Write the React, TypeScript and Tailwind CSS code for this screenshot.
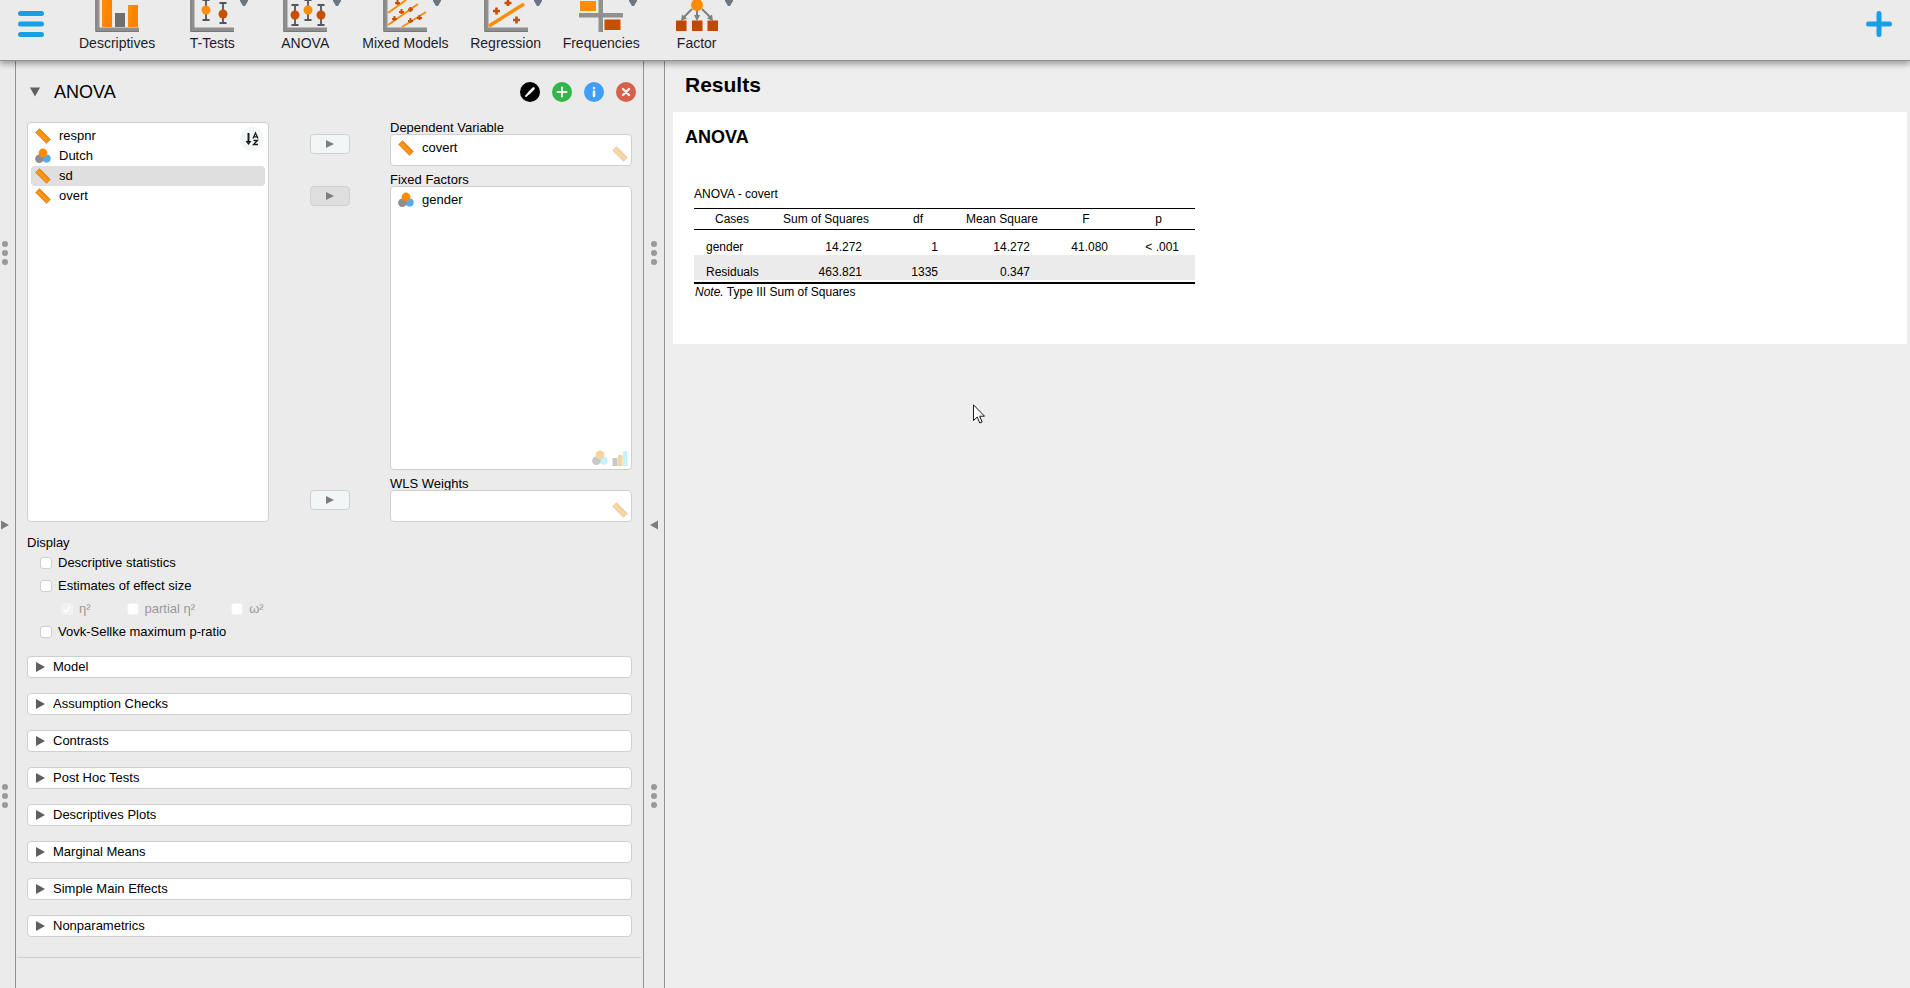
import { useState } from 'react';
import type { ReactNode } from 'react';

type VarType = 'scale' | 'nominal' | 'ordinal';

interface Variable {
  name: string;
  type: VarType;
}

const available: Variable[] = [
  { name: 'respnr', type: 'scale' },
  { name: 'Dutch', type: 'nominal' },
  { name: 'sd', type: 'scale' },
  { name: 'overt', type: 'scale' },
];

const sections = [
  'Model',
  'Assumption Checks',
  'Contrasts',
  'Post Hoc Tests',
  'Descriptives Plots',
  'Marginal Means',
  'Simple Main Effects',
  'Nonparametrics',
];

/* ── Variable icons ─────────────────────────────────────────── */

function VarIcon({ type, faded }: { type: VarType; faded?: boolean }) {
  const orange = faded ? '#f7d3a0' : '#ff8c05';
  const gray = faded ? '#c8c8c8' : '#8e8e8e';
  const blue = faded ? '#c2f3ff' : '#58abe6';

  return (
    <svg width="16" height="16" viewBox="0 0 16 16" className="block">
      {type === 'scale' && (
        <>
          <path d="M4.500 0.500 L15.500 11.500 L11.500 15.500 L0.500 4.500 Z" fill={orange} stroke={faded ? '#dccdb4' : '#b98a55'} strokeWidth="0.600" />
          <path d="M3.500 4 L12 12.500" stroke={faded ? '#fdeccb' : '#ffc27a'} strokeWidth="0.900" strokeDasharray="1.400 0.900" />
          <path d="M5.500 2.500 L13.500 10.500" stroke={faded ? '#f3c88c' : '#f07800'} strokeWidth="0.700" />
        </>
      )}
      {type === 'nominal' && (
        <>
          <circle cx="11.600" cy="10.600" r="4.100" fill={blue} />
          <circle cx="4.400" cy="10.800" r="4.300" fill={gray} />
          <circle cx="8" cy="5" r="4.400" fill={orange} />
        </>
      )}
      {type === 'ordinal' && (
        <>
          <rect x="0.500" y="8" width="5" height="8" fill={gray} />
          <rect x="6" y="5" width="4.500" height="11" fill={orange} />
          <rect x="11" y="1" width="4.500" height="15" fill={blue} />
        </>
      )}
    </svg>
  );
}

/* ── Ribbon icons ───────────────────────────────────────────── */

function Axes() {
  return (
    <>
      <path d="M0.500 0 V31.500 H44 V27.500 H4.500 V0 Z" fill="#8f8f8f" />
      <path d="M0.800 0 V31.500 H44" fill="none" stroke="#777777" strokeWidth="1" />
    </>
  );
}

function ErrorBar({ x, top, bottom, dot, color }: { x: number; top: number; bottom: number; dot: number; color: string }) {
  return (
    <>
      <path d={`M${x} ${top} V${bottom} M${x - 3.5} ${top} H${x + 3.5} M${x - 3.5} ${bottom} H${x + 3.5}`} stroke="#555555" strokeWidth="1.8" />
      <circle cx={x} cy={dot} r="4.5" fill={color} />
    </>
  );
}

function RibbonSvg({ children }: { children: ReactNode }) {
  return (
    <svg width="44" height="32" viewBox="0 0 44 32" className="block">
      {children}
    </svg>
  );
}

const ribbon: { label: string; menu: boolean; icon: ReactNode }[] = [
  {
    label: 'Descriptives',
    menu: false,
    icon: (
      <RibbonSvg>
        <Axes />
        <rect x="7" y="0" width="10" height="27" fill="#ff8c05" />
        <rect x="20" y="13" width="10" height="14" fill="#6f6f6f" />
        <rect x="33" y="5" width="10" height="22" fill="#ff8c05" />
        <path d="M12 0 L17 0 V27 H9 Z M38 5 H43 V27 H34 Z" fill="#f57c00" opacity="0.5" />
      </RibbonSvg>
    ),
  },
  {
    label: 'T-Tests',
    menu: true,
    icon: (
      <RibbonSvg>
        <Axes />
        <ErrorBar x={16} top={0} bottom={20} dot={10} color="#ff8c05" />
        <ErrorBar x={33} top={3} bottom={23} dot={14} color="#c75000" />
      </RibbonSvg>
    ),
  },
  {
    label: 'ANOVA',
    menu: true,
    icon: (
      <RibbonSvg>
        <Axes />
        <ErrorBar x={12} top={5} bottom={25} dot={15} color="#c75000" />
        <ErrorBar x={25} top={0} bottom={20} dot={10} color="#ff8c05" />
        <ErrorBar x={38} top={5} bottom={25} dot={15} color="#c75000" />
      </RibbonSvg>
    ),
  },
  {
    label: 'Mixed Models',
    menu: true,
    icon: (
      <RibbonSvg>
        <Axes />
        <path d="M5 13 L23 0 M5 25 L35 4 M19 27 L43 12" stroke="#ff8c05" strokeWidth="2" />
        <path
          d="M12 3 H17 M14.500 0 V5 M16 12 H21 M18.500 9 V14 M25 9.500 H30 M27.500 7 V12 M9 19 H14 M11.500 16 V21 M25 21 H30 M27.500 18 V23 M34 18 H39 M36.500 15 V20"
          stroke="#c75000"
          strokeWidth="2"
        />
      </RibbonSvg>
    ),
  },
  {
    label: 'Regression',
    menu: true,
    icon: (
      <RibbonSvg>
        <Axes />
        <path d="M5 26 L40 4" stroke="#ff8c05" strokeWidth="3.5" />
        <path d="M9 11 H16 M12.500 7.500 V14.500 M20.500 3 H27.500 M24 0 V6 M29 20 H36 M32.500 16.500 V23.500" stroke="#c75000" strokeWidth="2.6" />
      </RibbonSvg>
    ),
  },
  {
    label: 'Frequencies',
    menu: true,
    icon: (
      <RibbonSvg>
        <path d="M19.500 0 H24 V13 H44 V17.500 H24 V32 H19.500 V17.500 H0 V13 H19.500 Z" fill="#909090" />
        <rect x="1" y="1" width="16" height="10" fill="#ff8c05" />
        <rect x="25.500" y="19.500" width="16" height="10.500" fill="#c75000" />
      </RibbonSvg>
    ),
  },
  {
    label: 'Factor',
    menu: true,
    icon: (
      <RibbonSvg>
        <path d="M17 9 L8 18 M22 10 V18 M27 9 L36 18" stroke="#808080" strokeWidth="2" />
        <path d="M6 21 L7 14.500 L12 18.500 Z M22 21 L19 15 H25 Z M38 21 L37 14.500 L32 18.500 Z" fill="#808080" />
        <circle cx="22" cy="5" r="6" fill="#ff8c05" />
        <rect x="1" y="20.500" width="10.500" height="10.500" fill="#c04800" />
        <rect x="17" y="20.500" width="10.500" height="10.500" fill="#c04800" />
        <rect x="32.500" y="20.500" width="10.500" height="10.500" fill="#c04800" />
      </RibbonSvg>
    ),
  },
];

function Ribbon() {
  return (
    <header className="relative z-10 flex h-[61px] shrink-0 items-start border-b border-[#929292] bg-[#ebebeb] px-[18px] shadow-[0_3px_6px_rgba(0,0,0,0.35)]">
      <button type="button" aria-label="Main menu" className="mt-[11px] mr-[35px]">
        <svg width="26" height="26" viewBox="0 0 26 26" className="block">
          <path d="M2.500 2.500 H23.500 M2.500 13 H23.500 M2.500 23.500 H23.500" stroke="#17a0e6" strokeWidth="5" strokeLinecap="round" />
        </svg>
      </button>
      <nav className="flex gap-[21px]">
        {ribbon.map((item) => (
          <button key={item.label} type="button" className="flex min-w-[72px] flex-col items-center">
            <span className="relative flex w-[72px] justify-center">
              {item.icon}
              {item.menu && (
                <svg width="8" height="6" viewBox="0 0 8 6" className="absolute top-0 right-0">
                  <path d="M0 0 H8 V1 L5 6 H3 L0 1 Z" fill="#6c7680" />
                </svg>
              )}
            </span>
            <span className="mt-[3px] text-sm leading-4 whitespace-nowrap text-[#1c1c2c]">{item.label}</span>
          </button>
        ))}
      </nav>
      <button type="button" aria-label="Show modules" className="mt-[11px] ml-auto">
        <svg width="26" height="26" viewBox="0 0 26 26" className="block">
          <path d="M2.500 13 H23.500 M13 2.500 V23.500" stroke="#17a0e6" strokeWidth="5" strokeLinecap="round" />
        </svg>
      </button>
    </header>
  );
}

/* ── Splitters ──────────────────────────────────────────────── */

function Dots() {
  return (
    <span className="flex flex-col gap-[3px]">
      <span className="size-1.5 rounded-full bg-[#999999]" />
      <span className="size-1.5 rounded-full bg-[#999999]" />
      <span className="size-1.5 rounded-full bg-[#999999]" />
    </span>
  );
}

function SplitterHandle({ direction }: { direction: 'left' | 'right' }) {
  return (
    <div className="flex h-full w-2 flex-col items-center justify-between">
      <Dots />
      <button type="button" aria-label={direction === 'left' ? 'Hide panel' : 'Show data'}>
        <svg width="8" height="10" viewBox="0 0 8 10" className="block">
          <path d={direction === 'left' ? 'M8 0.5 V9.500 L0 5 Z' : 'M0 0.5 V9.500 L8 5 Z'} fill="#7d7d7d" />
        </svg>
      </button>
      <Dots />
    </div>
  );
}

/* ── Analysis form ──────────────────────────────────────────── */

function VariableRow({ variable, selected }: { variable: Variable; selected?: boolean }) {
  return (
    <li className={`flex h-5 items-center gap-2 rounded px-1 text-[13px] leading-5 ${selected ? 'bg-[#dfdfdf]' : ''}`}>
      <VarIcon type={variable.type} />
      {variable.name}
    </li>
  );
}

function TargetBox({ label, variables, allowed, pressed, tall }: {
  label: string;
  variables: Variable[];
  allowed: VarType[];
  pressed?: boolean;
  tall?: boolean;
}) {
  return (
    <div className="flex justify-between">
      <button
        type="button"
        aria-label={`Move to ${label}`}
        className={`mt-4 flex h-5 w-10 items-center justify-center rounded border border-[#d0d0d0] ${pressed ? 'bg-[#dfdfdf]' : 'bg-[#f3f6f7]'}`}
      >
        <svg width="8" height="8" viewBox="0 0 8 8">
          <path d="M0 0 V8 L8 4 Z" fill="#7d7d7d" />
        </svg>
      </button>
      <div className="w-[242px]">
        <h3 className="h-4 text-[13px] leading-5">{label}</h3>
        <div className={`relative rounded border border-[#cfcfcf] bg-white p-[3px] ${tall ? 'h-[284px]' : 'h-8'}`}>
          <ul>
            {variables.map((v) => (
              <VariableRow key={v.name} variable={v} />
            ))}
          </ul>
          <div className="absolute right-[3px] bottom-[3px] flex gap-1">
            {allowed.map((type) => (
              <VarIcon key={type} type={type} faded />
            ))}
          </div>
        </div>
      </div>
    </div>
  );
}

function CheckOption({ label, disabled, checked = false }: { label: string; disabled?: boolean; checked?: boolean }) {
  const [on, setOn] = useState(checked);
  return (
    <label className={`flex h-[23px] items-center gap-1.5 text-[13px] leading-4 ${disabled ? 'text-[#999999]' : ''}`}>
      <span className="relative flex size-3">
        <input
          type="checkbox"
          checked={on}
          disabled={disabled}
          onChange={() => setOn(!on)}
          className={`size-3 appearance-none rounded-[3px] border ${disabled ? 'border-[#f3f3f3]' : 'border-[#cfcfcf]'} ${on && disabled ? 'bg-[#f0f2f2]' : 'bg-white'}`}
        />
        {on && (
          <svg width="12" height="12" viewBox="0 0 12 12" className="pointer-events-none absolute inset-0">
            <path d="M3 6.500 L5 9 L9 3" fill="none" stroke={disabled ? '#ffffff' : '#333333'} strokeWidth="1.5" />
          </svg>
        )}
      </span>
      {label}
    </label>
  );
}

function RoundButton({ label, className, children }: { label: string; className: string; children: ReactNode }) {
  return (
    <button type="button" aria-label={label} className={`flex size-5 items-center justify-center rounded-full ${className}`}>
      <svg width="20" height="20" viewBox="0 0 20 20" fill="none" stroke="#f4f4f4" strokeWidth="2" strokeLinecap="round">
        {children}
      </svg>
    </button>
  );
}

function AnalysisForm() {
  return (
    <section className="w-[627px] shrink-0">
      <div className="px-[11px] pt-[21px]">
        <div className="flex h-5 items-center">
          <svg width="10" height="10" viewBox="0 0 10 10" className="ml-[3px]">
            <path d="M0 0.5 H10 L5 9.500 Z" fill="#5f5f5f" />
          </svg>
          <h1 className="ml-3.5 text-lg leading-5">ANOVA</h1>
          <div className="-mr-1 ml-auto flex gap-3">
            <RoundButton label="Rename" className="bg-black">
              <path d="M8.500 11.500 L13.500 6.500" strokeWidth="2.600" />
              <path d="M6 14 L7.500 12.500" strokeWidth="1.800" />
            </RoundButton>
            <RoundButton label="Duplicate" className="bg-[#33b54a]">
              <path d="M10 5.500 V14.500 M5.500 10 H14.500" />
            </RoundButton>
            <RoundButton label="Info" className="bg-[#429df5]">
              <path d="M10 9.500 V14 M10 6 V6.100" strokeWidth="2.600" />
            </RoundButton>
            <RoundButton label="Remove" className="bg-[#d6604a]">
              <path d="M7 7 L13 13 M13 7 L7 13" strokeWidth="2.400" />
            </RoundButton>
          </div>
        </div>

        <div className="mt-4 flex justify-between">
          <div className="relative mt-1 h-[400px] w-[242px] rounded border border-[#cfcfcf] bg-white p-[3px]">
            <ul>
              {available.map((v) => (
                <VariableRow key={v.name} variable={v} selected={v.name === 'sd'} />
              ))}
            </ul>
            <button type="button" aria-label="Sort" className="absolute top-1 right-1 size-6 rounded-full bg-[#f3f6f7]">
              <svg width="24" height="24" viewBox="0 0 24 24" className="block" fill="none" stroke="#1c1c1c">
                <path d="M8.500 6 V15" strokeWidth="2" />
                <path d="M5.500 14 H11.500 L8.500 18 Z" fill="#1c1c1c" stroke="none" />
                <path d="M13 11.500 L15.500 6 L18 11.500 M14 9.800 H17" strokeWidth="1.300" />
                <path d="M13.500 13.500 H17.500 L13.500 17.500 H18" strokeWidth="1.300" />
              </svg>
            </button>
          </div>
          <div className="flex w-[322px] flex-col gap-1">
            <TargetBox label="Dependent Variable" variables={[{ name: 'covert', type: 'scale' }]} allowed={['scale']} />
            <TargetBox label="Fixed Factors" variables={[{ name: 'gender', type: 'nominal' }]} allowed={['nominal', 'ordinal']} pressed tall />
            <TargetBox label="WLS Weights" variables={[]} allowed={['scale']} />
          </div>
        </div>

        <fieldset className="mt-3">
          <legend className="text-[13px] leading-[17px]">Display</legend>
          <div className="flex flex-col items-start pl-[13px]">
            <CheckOption label="Descriptive statistics" />
            <CheckOption label="Estimates of effect size" />
            <div className="flex gap-9 pl-[21px]">
              <CheckOption label="η²" disabled checked />
              <CheckOption label="partial η²" disabled />
              <CheckOption label="ω²" disabled />
            </div>
            <CheckOption label="Vovk-Sellke maximum p-ratio" />
          </div>
        </fieldset>

        <div className="mt-[13px] flex flex-col gap-[15px]">
          {sections.map((name) => (
            <button
              key={name}
              type="button"
              className="flex h-[22px] items-center gap-2 rounded border border-[#cfcfcf] bg-white px-2 text-[13px] leading-5"
            >
              <svg width="9" height="10" viewBox="0 0 9 10">
                <path d="M0 0 V10 L9 5 Z" fill="#5f5f5f" />
              </svg>
              {name}
            </button>
          ))}
        </div>
      </div>
      <hr className="mt-5 mr-0.5 ml-px border-[#cfcfcf]" />
    </section>
  );
}

/* ── Results ────────────────────────────────────────────────── */

function Results() {
  return (
    <main className="min-w-0 flex-1 bg-[#eeeeee] pr-[3px] pl-2">
      <h1 className="px-3 pt-3 text-[21px] leading-6 font-bold">Results</h1>
      <article className="mt-[15px] h-[232px] bg-white px-3 pt-[13px]">
        <h2 className="text-lg leading-6 font-bold">ANOVA</h2>
        <div className="mt-[37px] ml-[9px] w-[501px] text-xs leading-4">
          <table className="w-full table-fixed border-collapse text-right">
            <caption className="h-[22px] text-left align-top">ANOVA - covert</caption>
            <colgroup>
              <col className="w-[76px]" />
              <col className="w-[112px]" />
              <col className="w-[72px]" />
              <col className="w-[96px]" />
              <col className="w-[72px]" />
              <col className="w-[73px]" />
            </colgroup>
            <thead>
              <tr className="h-[21px] border-y border-black text-center">
                <th className="font-normal">Cases</th>
                <th className="font-normal">Sum of Squares</th>
                <th className="font-normal">df</th>
                <th className="font-normal">Mean Square</th>
                <th className="font-normal">F</th>
                <th className="font-normal">p</th>
              </tr>
            </thead>
            <tbody>
              <tr className="h-[25px] align-bottom">
                <td className="pl-3 text-left">gender</td>
                <td className="pr-5">14.272</td>
                <td className="pr-4">1</td>
                <td className="pr-5">14.272</td>
                <td className="pr-3.5">41.080</td>
                <td className="pr-4">&lt; .001</td>
              </tr>
              <tr className="h-[25px] bg-[#ebebeb] align-bottom">
                <td className="pl-3 text-left">Residuals</td>
                <td className="pr-5">463.821</td>
                <td className="pr-4">1335</td>
                <td className="pr-5">0.347</td>
                <td />
                <td />
              </tr>
            </tbody>
          </table>
          <p className="mt-0.5 border-t-2 border-black pl-px">
            <em>Note.</em> Type III Sum of Squares
          </p>
        </div>
      </article>
    </main>
  );
}

export default function App() {
  return (
    <div className="relative flex h-screen flex-col overflow-hidden bg-[#ebebeb] font-['Liberation_Sans',Arial,sans-serif] text-black">
      <Ribbon />
      <div className="flex min-h-0 flex-1">
        <div className="flex w-4 shrink-0 border-r border-[#929292] py-[180px] pl-px">
          <SplitterHandle direction="right" />
        </div>
        <AnalysisForm />
        <div className="flex w-[22px] shrink-0 justify-center border-x border-[#929292] py-[180px]">
          <SplitterHandle direction="left" />
        </div>
        <Results />
      </div>

      {/* mouse pointer */}
      <svg width="12" height="20" viewBox="0 0 12 20" className="pointer-events-none absolute top-[404px] left-[973px]">
        <path d="M0.500 0.800 V16.500 L4.200 13 L6.800 19 L9.200 18 L6.600 12.200 H11.500 Z" fill="#ffffff" stroke="#1c1424" strokeWidth="1" />
      </svg>
    </div>
  );
}
